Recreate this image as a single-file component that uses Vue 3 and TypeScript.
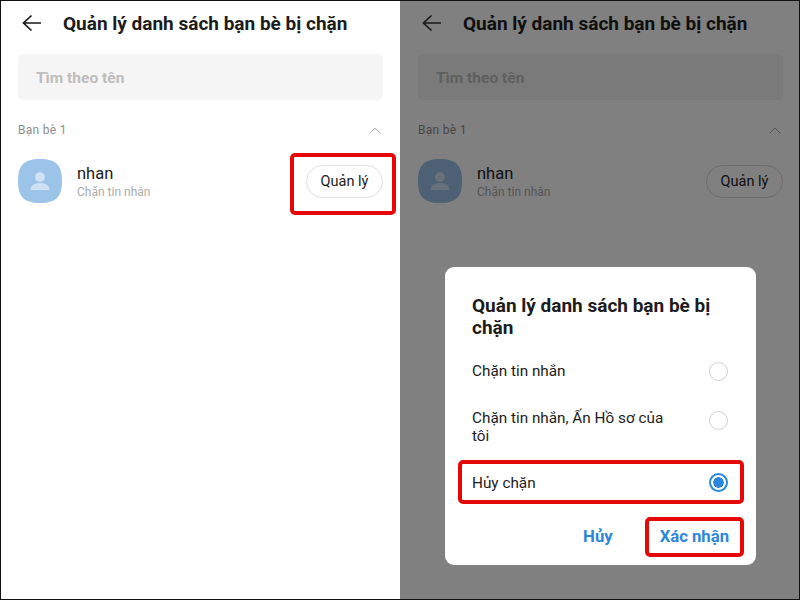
<template>
  <div class="page">
    <section v-for="(side, i) in sides" :key="side" class="phone" :class="side">
      <header class="topbar">
        <svg class="back" width="20" height="18" viewBox="0 0 20 18" fill="none">
          <path d="M19 9H2M9.500 1.500L1.500 9l8 7.500" stroke="#1a1a1a" stroke-width="1.700" />
        </svg>
        <h1>Quản lý danh sách bạn bè bị chặn</h1>
      </header>
      <div class="search">Tìm theo tên</div>
      <div class="group">
        <span>Bạn bè 1</span>
        <svg width="12" height="7" viewBox="0 0 12 7" fill="none">
          <path class="chevron" d="M.7 6.300L6 1l5.300 5.300" stroke-width="1" />
        </svg>
      </div>
      <div class="friend">
        <div class="avatar">
          <svg width="44" height="44" viewBox="0 0 44 44">
            <path class="squircle" d="M22 0C38 0 44 6 44 22S38 44 22 44 0 38 0 22 6 0 22 0Z" />
            <circle class="figure" cx="22" cy="18" r="5" />
            <path class="figure" d="M12.500 31c0-5 4.500-7 9.500-7s9.500 2 9.500 7Z" />
          </svg>
        </div>
        <div class="info">
          <div class="name">nhan</div>
          <div class="sub">Chặn tin nhắn</div>
        </div>
        <div class="manage" :class="{ marked: i === 0 }">
          <button type="button">Quản lý</button>
        </div>
      </div>

      <div v-if="side === 'dimmed'" class="dialog">
        <h2>Quản lý danh sách bạn bè bị chặn</h2>
        <div
          v-for="opt in options"
          :key="opt.label"
          class="option"
          :class="{ marked: opt.selected, wrapped: opt.wrapped }"
        >
          <span>{{ opt.label }}</span>
          <i class="radio" :class="{ on: opt.selected }"></i>
        </div>
        <div class="actions">
          <button type="button" class="link">Hủy</button>
          <button type="button" class="link confirm">Xác nhận</button>
        </div>
      </div>
    </section>
  </div>
</template>

<script setup lang="ts">
const sides = ['plain', 'dimmed']

const options = [
  { label: 'Chặn tin nhắn', selected: false, wrapped: false },
  { label: 'Chặn tin nhắn, Ấn Hồ sơ của tôi', selected: false, wrapped: true },
  { label: 'Hủy chặn', selected: true, wrapped: false },
]
</script>

<style>
html, body { margin: 0; background: #fff; }
</style>

<style scoped>
.page {
  display: grid;
  grid-template-columns: 399px 399px;
  box-sizing: border-box;
  width: 800px;
  height: 600px;
  overflow: hidden;
  border: 1px solid #111;
  font-family: Roboto, "Noto Sans", sans-serif;
  color: #1c1c1c;
}
.phone {
  position: relative;
  box-sizing: border-box;
  padding: 0 17px;
  background: #fff;
}
.dimmed {
  padding: 0 16px 0 18px;
  background: #808080;
  color: #0f0f0f;
}

.topbar {
  display: flex;
  align-items: center;
  gap: 21px;
  height: 44px;
  padding-left: 4px;
}
.back { flex: none; }
h1 {
  margin: 0;
  font-size: 19px;
  font-weight: 700;
  white-space: nowrap;
}
.search {
  margin-top: 9px;
  height: 46px;
  line-height: 48px;
  padding-left: 18px;
  border-radius: 5px;
  background: #f5f5f5;
  color: #bdbdbd;
  font-size: 15.500px;
  font-weight: 700;
}
.dimmed .search { background: #7a7a7a; color: #5f5f5f; }
.group {
  display: flex;
  align-items: center;
  justify-content: space-between;
  margin-top: 23px;
  padding-right: 2px;
  font-size: 12px;
  letter-spacing: .3px;
  color: #8c8c8c;
}
.dimmed .group { color: #464646; }
.chevron { stroke: #b0b0b0; }
.dimmed .chevron { stroke: #565656; }
.friend {
  display: flex;
  align-items: center;
  margin-top: 22px;
}
.avatar { flex: none; height: 44px; }
.squircle { fill: #9cc3e8; }
.figure { fill: #cfe1f3; }
.dimmed .squircle { fill: #4e6174; }
.dimmed .figure { fill: #687079; }
.info { margin-left: 15px; flex: 1; }
.name { font-size: 16.500px; line-height: 21px; }
.sub { font-size: 12px; line-height: 16px; color: #ababab; }
.dimmed .sub { color: #555; }
.manage { position: relative; }
.manage button {
  display: block;
  width: 77px;
  height: 33px;
  border: 1px solid #e0e0e0;
  border-radius: 17px;
  background: transparent;
  color: inherit;
  font: 400 14.500px Roboto, sans-serif;
  padding: 0;
}
.dimmed .manage button { border-color: #6c6c6c; }
.manage.marked::after {
  content: "";
  position: absolute;
  inset: -12px -13px -17px -16px;
  border: 4px solid #e60808;
  border-radius: 5px;
}

.dialog {
  position: absolute;
  left: 45px;
  top: 266px;
  width: 311px;
  height: 298px;
  box-sizing: border-box;
  padding: 28px 27px 0 27px;
  border-radius: 9px;
  background: #fff;
  color: #1c1c1c;
}
h2 {
  margin: 0 0 11px;
  font-size: 19px;
  line-height: 22px;
  font-weight: 700;
  max-width: 250px;
}
.option {
  position: relative;
  display: flex;
  align-items: flex-start;
  justify-content: space-between;
  padding: 12px 0;
  font-size: 15.300px;
  line-height: 18px;
  margin-bottom: 4.500px;
}
.option span { max-width: 200px; }
.radio {
  flex: none;
  box-sizing: border-box;
  width: 19px;
  height: 19px;
  margin: -.5px 1.500px 0 0;
  border: 1px solid #d0d0d0;
  border-radius: 50%;
}
.wrapped .radio { margin-top: 2px; }
.radio.on {
  border: 2px solid #2b87dc;
  background: radial-gradient(circle, #2b87dc 0 5px, transparent 5.500px);
}
.option.marked::after {
  content: "";
  position: absolute;
  inset: -2px -15px 0 -14px;
  border: 4px solid #e60808;
  border-radius: 5px;
}
.actions {
  display: flex;
  justify-content: flex-end;
  align-items: center;
  gap: 47px;
  margin-top: 23px;
}
.link {
  position: relative;
  border: 0;
  background: none;
  padding: 0;
  color: #2b87dc;
  font: 700 16.700px Roboto, sans-serif;
}
.confirm::after {
  content: "";
  position: absolute;
  inset: -10px -15px -11px -15px;
  border: 4px solid #e60808;
  border-radius: 5px;
}
</style>
